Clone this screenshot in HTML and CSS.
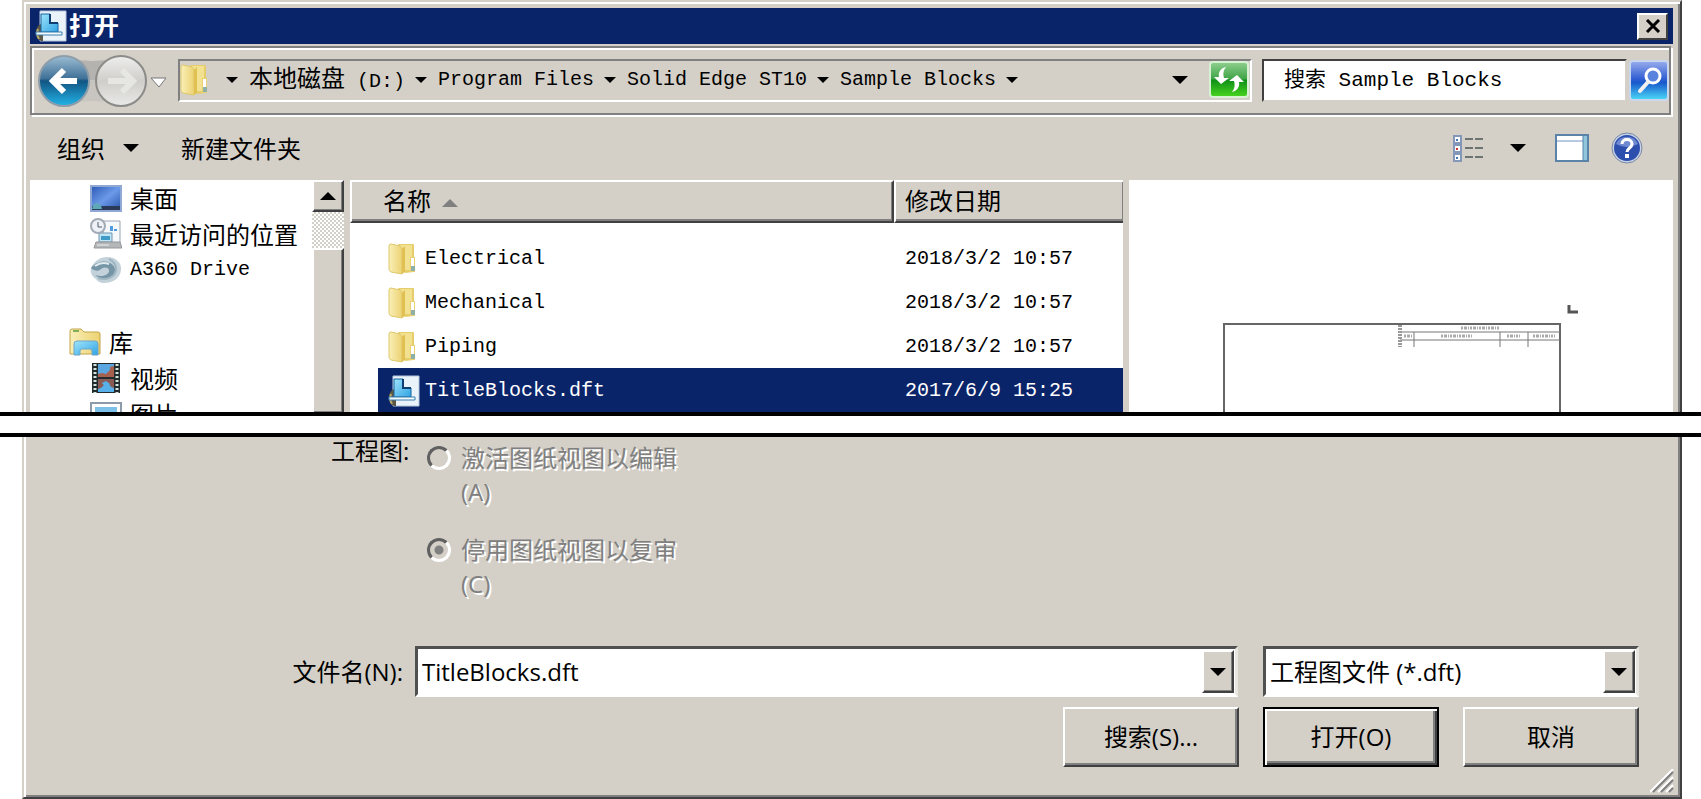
FILE: index.html
```
<!DOCTYPE html>
<html lang="zh-CN">

<head>
    <meta charset="UTF-8">
    <meta name="viewport" content="width=device-width, initial-scale=1.0">
    <title>打开</title>
    <link rel="stylesheet" href="styles.css">
</head>

<body>
    <!-- shared icons -->
    <svg class="defs" width="0" height="0" aria-hidden="true">
        <defs>
            <linearGradient id="gFolder" x1="0" x2="1" y1="0" y2="0">
                <stop offset="0" stop-color="#f9efb8" />
                <stop offset="1" stop-color="#ecd272" />
            </linearGradient>
            <linearGradient id="gCyan" x1="0" x2="1" y1="0" y2="1">
                <stop offset="0" stop-color="#9fe4fb" />
                <stop offset="1" stop-color="#2fa3e4" />
            </linearGradient>
            <symbol id="folder" viewBox="0 0 28 32">
                <path d="M10 2q0-1 1-1h14q1 0 1 1v27l-9 1z" fill="#e6cd6c" />
                <path d="M12 2h12v25H12z" fill="#f3e192" />
                <path d="M1 3q0-2 2-2l9 2q2 1 2 3v25l-11-2q-2-1-2-3z" fill="url(#gFolder)" stroke="#dfc86c" />
                <path d="M14 6l3-3v26l-3 2z" fill="#e0c050" />
                <path d="M22 14h5v15h-5z" fill="#ead274" />
                <path d="M23 15h3v8h-3z" fill="#fff" />
                <path d="M23 23h4v5h-4z" fill="#8fb0a4" />
            </symbol>
            <symbol id="draft" viewBox="0 0 32 32">
                <path d="M5 1h26v30H5z" fill="#eaf2fa" stroke="#b4c6de" />
                <path d="M6 14c-7 3-7 14 0 17h2V14z" fill="#5c5844" />
                <path d="M3 19c-1 3-1 7 1 10" stroke="#b8a868" stroke-width="2" fill="none" />
                <path d="M6 4h9v9h8v9H6z" fill="url(#gCyan)" stroke="#17659f" stroke-width="1" />
                <path d="M15 4v9h8" fill="none" stroke="#0d3f72" stroke-width="2" />
                <path d="M1 22h26v3H1z" fill="#f4fbff" stroke="#3b7cac" />
            </symbol>
        </defs>
    </svg>

    <div class="window window-top">
        <div class="titlebar">
            <svg class="app-icon" width="32" height="32"><use href="#draft" /></svg>
            <h1>打开</h1>
            <button type="button" class="close" aria-label="关闭">
                <svg width="16" height="14" viewBox="0 0 16 14"><path d="M2 1l12 12M14 1L2 13" stroke="#000" stroke-width="3" /></svg>
            </button>
        </div>

        <div class="navbar">
            <button type="button" class="nav-buttons" aria-label="返回">
                <svg width="130" height="54" viewBox="0 0 130 54">
                    <defs>
                        <linearGradient id="gBack" x1="0" x2="0" y1="0" y2="1">
                            <stop offset="0" stop-color="#9dbdd4" />
                            <stop offset="0.45" stop-color="#3f7197" />
                            <stop offset="0.5" stop-color="#115583" />
                            <stop offset="1" stop-color="#22b4e8" />
                        </linearGradient>
                        <linearGradient id="gFwd" x1="0" x2="0" y1="0" y2="1">
                            <stop offset="0" stop-color="#eeeeec" />
                            <stop offset="0.5" stop-color="#cfcecb" />
                            <stop offset="1" stop-color="#e9e9e7" />
                        </linearGradient>
                    </defs>
                    <path d="M28 4q28 6 57 0v22H28z" fill="#b5b3b0" />
                    <path d="M28 26h57v24q-29-6-57 0z" fill="#c8c5c0" />
                    <circle cx="28" cy="27" r="25" fill="url(#gBack)" stroke="#8d9daa" stroke-width="2" />
                    <path d="M28 16L17 27l11 11M17 27h24" fill="none" stroke="#fff" stroke-width="6" />
                    <circle cx="85" cy="27" r="25" fill="url(#gFwd)" stroke="#8b8b88" stroke-width="2" />
                    <path d="M86 16l11 11-11 11M97 27H72" fill="none" stroke="#e6e6e3" stroke-width="6" />
                    <path d="M115 24h15l-7 9z" fill="#fff" stroke="#77777b" stroke-width="1" />
                </svg>
            </button>

            <div class="address">
                <svg class="address-folder" width="28" height="32"><use href="#folder" /></svg>
                <i class="arrow small"></i>
                <a href="#"><span class="cjk">本地磁盘</span> (D:)</a>
                <i class="arrow small"></i>
                <a href="#">Program Files</a>
                <i class="arrow small"></i>
                <a href="#">Solid Edge ST10</a>
                <i class="arrow small"></i>
                <a href="#">Sample Blocks</a>
                <i class="arrow small"></i>
                <button type="button" class="plain push" aria-label="历史记录"><i class="arrow"></i></button>
                <button type="button" class="plain refresh" aria-label="刷新">
                    <svg width="40" height="37" viewBox="0 0 40 37">
                        <defs>
                            <linearGradient id="gGreen" x1="0" x2="0" y1="0" y2="1">
                                <stop offset="0" stop-color="#8fd08f" />
                                <stop offset="0.48" stop-color="#41a447" />
                                <stop offset="0.52" stop-color="#109018" />
                                <stop offset="1" stop-color="#4ad520" />
                            </linearGradient>
                        </defs>
                        <rect x="1" y="1" width="38" height="35" rx="3" fill="url(#gGreen)" stroke="#d8f0d4" stroke-width="2" />
                        <path d="M17 6c-5 1-8 5-7 10H5l7 7 8-6h-5c-1-4-1-7 2-11z" fill="#fff" />
                        <path d="M23 31c5-1 8-5 7-10h5l-7-7-8 6h5c1 4 1 7-2 11z" fill="#fff" />
                    </svg>
                </button>
            </div>

            <input class="search" type="text" placeholder="搜索 Sample Blocks" aria-label="搜索">
            <button type="button" class="plain" aria-label="开始搜索">
                <svg width="40" height="42" viewBox="0 0 40 42">
                    <defs>
                        <linearGradient id="gBlue" x1="0" x2="0" y1="0" y2="1">
                            <stop offset="0" stop-color="#9aaeec" />
                            <stop offset="0.45" stop-color="#3360d4" />
                            <stop offset="0.55" stop-color="#1858cc" />
                            <stop offset="1" stop-color="#4cdcf8" />
                        </linearGradient>
                    </defs>
                    <rect x="1" y="1" width="38" height="39" rx="3" fill="url(#gBlue)" stroke="#c8d6ee" stroke-width="2" />
                    <circle cx="24" cy="16" r="7" fill="#5a83dd" stroke="#fff" stroke-width="3" />
                    <path d="M19 22l-8 9" stroke="#f0f0f0" stroke-width="4" stroke-linecap="round" />
                </svg>
            </button>
        </div>

        <div class="toolbar">
            <button type="button" class="plain">组织 <i class="arrow"></i></button>
            <button type="button" class="plain">新建文件夹</button>
            <button type="button" class="plain push" aria-label="更改视图">
                <svg width="32" height="28" viewBox="0 0 32 28">
                    <g fill="#fff" stroke="#8497b8" stroke-width="2">
                        <rect x="2" y="2" width="7" height="7" />
                        <rect x="2" y="11" width="7" height="7" />
                        <rect x="2" y="20" width="7" height="7" />
                    </g>
                    <path d="M4 5h2v2H4zM4 23h2v2H4z" fill="#3f78b4" />
                    <path d="M4 14h2v2H4z" fill="#c33" />
                    <path d="M13 5h8m2 0h8M13 14h8m2 0h8M13 23h8m2 0h8" stroke="#6b7470" stroke-width="2" />
                </svg>
                <i class="arrow"></i>
            </button>
            <button type="button" class="plain" aria-label="预览窗格">
                <svg width="34" height="28" viewBox="0 0 34 28">
                    <rect x="1" y="1" width="32" height="26" fill="#fff" stroke="#5b82a9" stroke-width="2" />
                    <path d="M2 7h26" stroke="#6f94c4" stroke-width="1" />
                    <path d="M28 2h4v24h-4z" fill="#8fc6dc" />
                    <path d="M28 2v24" stroke="#5b82a9" />
                </svg>
            </button>
            <button type="button" class="plain" aria-label="帮助">
                <svg width="32" height="32" viewBox="0 0 32 32">
                    <circle cx="16" cy="16" r="15" fill="#c9d3e6" stroke="#7a88a4" stroke-width="1" />
                    <circle cx="16" cy="16" r="13" fill="#2c4fae" />
                    <path d="M5 12a12 12 0 0 1 22 0q-11 6-22 0z" fill="#6f8ad0" />
                    <path d="M11 12c0-6 10-6 10 0 0 4-5 4-5 8" fill="none" stroke="#fff" stroke-width="3" />
                    <path d="M14 22h4v4h-4z" fill="#fff" />
                </svg>
            </button>
        </div>

        <div class="browser">
            <ul class="places">
                <li>
                    <svg width="32" height="28" viewBox="0 0 32 28">
                        <defs>
                            <linearGradient id="gScreen" x1="0" x2="1" y1="0" y2="1">
                                <stop offset="0" stop-color="#2a58b4" />
                                <stop offset="0.5" stop-color="#6c9ae8" />
                                <stop offset="1" stop-color="#2450a8" />
                            </linearGradient>
                        </defs>
                        <rect x="1" y="2" width="30" height="25" fill="url(#gScreen)" stroke="#8fa9d4" stroke-width="2" />
                        <path d="M2 22h28v4H2z" fill="#2a3a58" />
                        <path d="M2 25q1-6 5-6t5 6z" fill="#5ea8b8" />
                    </svg>
                    桌面
                </li>
                <li>
                    <svg width="32" height="32" viewBox="0 0 32 32">
                        <path d="M13 3h17v22H13z" fill="#f6f9fc" stroke="#9aa6b2" />
                        <path d="M20 8h3v5h-3zM24 11h3v2h-3z" fill="#4f9be0" />
                        <path d="M9 15h13v9H9z" fill="#bfe4f4" stroke="#6f93b0" />
                        <path d="M11 18h9v4h-9z" fill="#3f9cc8" />
                        <path d="M6 24h24l2 6H4z" fill="#b4b6b8" stroke="#94979a" />
                        <path d="M7 27h12" stroke="#eee" />
                        <circle cx="8" cy="8" r="7" fill="#eef1f5" stroke="#a3abb6" stroke-width="2" />
                        <path d="M8 4v5h4" fill="none" stroke="#4c5a70" />
                    </svg>
                    最近访问的位置
                </li>
                <li>
                    <svg width="32" height="28" viewBox="0 0 32 28">
                        <path d="M1 12C4 4 12 1 17 1c9 0 15 6 14 13-1 9-9 13-17 13-4 0-7-2-8-4C2 21 0 16 1 12z" fill="#c3d2da" />
                        <path d="M5 19c8 3 15-1 14-5-1-3-5-3-8-1-3 3-7 2-10-1C6 6 14 4 20 7c8 4 6 13-2 15-5 1-10 0-13-3z" fill="#7695a6" />
                        <path d="M8 22c8 3 18-1 18-9 0-5-3-8-7-10" stroke="#9fb6c2" stroke-width="2" fill="none" />
                        <path d="M5 10c4-3 9-4 14-2" stroke="#e2ebf0" stroke-width="2" fill="none" />
                    </svg>
                    <span class="mono">A360 Drive</span>
                </li>
                <li></li>
                <li class="root">
                    <svg width="32" height="28" viewBox="0 0 32 28">
                        <path d="M1 3q0-2 2-2h9l3 3h14q2 0 2 2v20H1z" fill="url(#gFolder)" stroke="#c3a548" />
                        <path d="M4 3h6" stroke="#7eb05a" stroke-width="2" />
                        <path d="M5 27V16q0-3 3-3h18q3 0 3 3v11h-6v-4q0-2-2-2h-8q-2 0-2 2v4z" fill="url(#gCyan)" stroke="#6fa5c8" />
                    </svg>
                    库
                </li>
                <li>
                    <svg width="32" height="30" viewBox="0 0 32 30">
                        <path d="M2 0h28v30H2z" fill="#222c2e" />
                        <path d="M8 1h16v13H8z" fill="#5aa6e0" />
                        <path d="M8 16h16v13H8z" fill="#58b0ea" />
                        <path d="M8 14v-3l4-1 4 1 4-4V4l4-1v11z" fill="#a8604e" />
                        <path d="M8 16h16v9l-3-1-3-4-4 2-3 3-3 1z" fill="#8a5a54" />
                        <path d="M12 20l4-2 4 3-3 5z" fill="#58b0ea" />
                        <path d="M5 1v29M27 1v29" stroke="#d4e6dc" stroke-width="3" stroke-dasharray="2 2" />
                    </svg>
                    视频
                </li>
                <li>
                    <svg width="32" height="28" viewBox="0 0 32 28">
                        <rect x="1" y="3" width="30" height="24" fill="#fff" stroke="#8d9aaa" stroke-width="2" />
                        <path d="M5 7h22v16H5z" fill="#7cc2e8" />
                    </svg>
                    图片
                </li>
            </ul>
            <div class="scrollbar">
                <button type="button" class="scroll-up" aria-label="向上滚动"><i class="arrow up"></i></button>
                <div class="thumb"></div>
            </div>

            <div class="files">
                <table>
                    <thead>
                        <tr>
                            <th>名称 <i class="arrow up sort"></i></th>
                            <th class="date">修改日期</th>
                        </tr>
                    </thead>
                    <tbody>
                        <tr>
                            <td><div class="file"><svg width="28" height="32"><use href="#folder" /></svg>Electrical</div></td>
                            <td>2018/3/2 10:57</td>
                        </tr>
                        <tr>
                            <td><div class="file"><svg width="28" height="32"><use href="#folder" /></svg>Mechanical</div></td>
                            <td>2018/3/2 10:57</td>
                        </tr>
                        <tr>
                            <td><div class="file"><svg width="28" height="32"><use href="#folder" /></svg>Piping</div></td>
                            <td>2018/3/2 10:57</td>
                        </tr>
                        <tr class="selected">
                            <td><div class="file"><svg width="32" height="32"><use href="#draft" /></svg>TitleBlocks.dft</div></td>
                            <td>2017/6/9 15:25</td>
                        </tr>
                    </tbody>
                </table>
            </div>

            <div class="preview">
                <svg width="544" height="232" viewBox="0 0 544 232">
                    <path d="M95 232V144h336v88" fill="none" stroke="#666" stroke-width="2" />
                    <path d="M440 125v7h9" fill="none" stroke="#555" stroke-width="3" />
                    <path d="M271 152h160M271 160h160" fill="none" stroke="#777" />
                    <path d="M271 145v22" stroke="#999" stroke-width="4" stroke-dasharray="2 1" />
                    <path d="M285 152v15M371 152v15M399 152v15" stroke="#777" />
                    <path d="M332 148h38M275 156h8M312 156h31M378 156h13M404 156h22" stroke="#aaa" stroke-width="3" stroke-dasharray="2 1 3 1 1 1" />
                </svg>
            </div>
        </div>
    </div>

    <div class="cut"></div>

    <form class="window window-bottom">
        <div class="options" role="radiogroup" aria-labelledby="draftLabel">
            <span class="options-label" id="draftLabel">工程图:</span>
            <div class="choices">
                <div class="choice">
                    <input type="radio" id="activate" name="view" disabled>
                    <label for="activate">激活图纸视图以编辑(A)</label>
                </div>
                <div class="choice">
                    <input type="radio" id="inactive" name="view" checked disabled>
                    <label for="inactive">停用图纸视图以复审(C)</label>
                </div>
            </div>
        </div>

        <div class="name-row">
            <label for="filename">文件名(N):</label>
            <div class="combo name-combo">
                <input type="text" id="filename" value="TitleBlocks.dft">
                <button type="button" class="drop" aria-label="展开"><i class="arrow"></i></button>
            </div>
            <div class="combo type-combo">
                <select aria-label="文件类型">
                    <option>工程图文件 (*.dft)</option>
                </select>
                <span class="drop"><i class="arrow"></i></span>
            </div>
        </div>

        <div class="actions">
            <button type="button">搜索(S)...</button>
            <button type="submit" class="default">打开(O)</button>
            <button type="button">取消</button>
        </div>

        <svg class="grip" width="24" height="24" viewBox="0 0 24 24">
            <path d="M0 23L23 0M8 23L23 8M16 23l7-7" stroke="#fff" stroke-width="2" />
            <path d="M3 23L23 3M11 23l12-12M19 23l4-4" stroke="#808080" stroke-width="2" />
        </svg>
    </form>
</body>

</html>
```

FILE: styles.css
```
* {
    box-sizing: border-box;
}

body {
    margin: 0;
    background: #fff;
    color: #000;
    font-family: "Open Sans", "Noto Sans CJK SC", sans-serif;
    font-size: 24px;
    line-height: 34px;
}

button,
input,
select {
    font: inherit;
    color: inherit;
    border-radius: 0;
}

svg {
    display: block;
    flex: none;
}

.defs {
    position: absolute;
}

.window {
    margin: 0 19px 0 22px;
    background: #d4d0c8;
    border: solid;
    border-width: 0 2px;
    border-color: #d4d0c8 #404040 #404040 #d4d0c8;
    box-shadow: inset 2px 0 #fff, inset -2px 0 #808080;
}

.window-top {
    font-family: "Noto Sans CJK SC", sans-serif;
    border-top-width: 2px;
    padding: 6px 7px 0 6px;
    box-shadow: inset 2px 2px #fff, inset -2px 0 #808080;
}

.mono,
.address,
td {
    font-family: "Liberation Mono", monospace;
    font-size: 20px;
}

.plain {
    display: flex;
    align-items: center;
    border: 0;
    padding: 0;
    background: none;
}

.push {
    margin-left: auto;
}

/* triangles */
.arrow {
    flex: none;
    display: inline-block;
    border: solid transparent;
    border-width: 8px 8px 0;
    border-top-color: #000;
}

.arrow.small {
    border-width: 6px 6px 0;
    margin: 0 11px 0 10px;
}

.arrow.up {
    border-width: 0 8px 8px;
    border-bottom-color: #000;
}

.arrow.sort {
    border-bottom-color: #808080;
    margin-left: 6px;
    vertical-align: middle;
}

/* title bar */
.titlebar {
    display: flex;
    align-items: center;
    height: 36px;
    padding: 0 5px;
    background: #0a246a;
    color: #fff;
}

.titlebar h1 {
    flex: 1;
    margin: 0 0 0 2px;
    font-size: 25px;
    line-height: 32px;
    padding-bottom: 4px;
    font-weight: bold;
}

.close {
    display: flex;
    align-items: center;
    justify-content: center;
    width: 31px;
    height: 27px;
    padding: 0;
    background: #d4d0c8;
    border: 2px solid;
    border-color: #fff #404040 #404040 #fff;
}

/* address bar */
.navbar {
    display: flex;
    align-items: center;
    height: 69px;
    margin: 2px 2px 2px 0;
    padding: 0 0 0 4px;
    border: 2px solid #808080;
    box-shadow: inset 2px 2px #fff, 2px 2px #fff;
}

.nav-buttons {
    border: 0;
    padding: 0;
    background: none;
}

.address {
    flex: 1;
    display: flex;
    align-items: center;
    height: 43px;
    margin: 0 10px 0 12px;
    padding: 0 1px 2px 0;
    border: 2px solid;
    border-color: #808080 #fff #fff #808080;
}

.address a {
    color: #000;
    text-decoration: none;
    white-space: pre;
}

.address-folder {
    margin-right: 8px;
}

.cjk {
    font-family: "Noto Sans CJK SC", sans-serif;
    font-size: 24px;
}

.refresh {
    margin-left: 21px;
}

.search {
    width: 365px;
    height: 43px;
    margin-right: 2px;
    padding: 0 20px;
    background: #fff;
    border: 2px solid;
    border-color: #404040 #d4d0c8 #d4d0c8 #404040;
    font-family: "Liberation Mono", "Noto Sans CJK SC", monospace;
    font-size: 21px;
}

.search::placeholder {
    color: #000;
    opacity: 1;
}

/* toolbar */
.toolbar {
    display: flex;
    align-items: center;
    gap: 38px;
    height: 63px;
    padding: 0 30px 1px 27px;
}

.toolbar .arrow {
    margin-left: 18px;
}

.toolbar .plain:first-child {
    margin-right: 4px;
}

.toolbar .push {
    margin-left: auto;
    margin-right: -9px;
}

.toolbar .push .arrow {
    margin-left: 26px;
}

.toolbar .plain:last-child {
    margin-left: -16px;
}

/* panes */
.browser {
    display: flex;
    height: 232px;
    overflow: hidden;
}

.places {
    width: 282px;
    margin: 0;
    padding: 0;
    background: #fff;
    list-style: none;
}

.places li {
    display: flex;
    align-items: center;
    gap: 8px;
    height: 36px;
    padding-left: 60px;
    white-space: nowrap;
}

.places .root {
    padding-left: 39px;
}

.scrollbar {
    display: flex;
    flex-direction: column;
    width: 32px;
    margin-right: 6px;
    background: repeating-conic-gradient(#d4d0c8 0 25%, #fff 0 50%) 0 0 / 4px 4px;
}

.scroll-up,
.thumb,
.drop {
    background: #d4d0c8;
    border: 2px solid;
    border-color: #fff #404040 #404040 #fff;
    box-shadow: inset -1px -1px #808080;
}

.scroll-up {
    display: flex;
    align-items: center;
    justify-content: center;
    height: 32px;
    padding: 0;
}

.thumb {
    flex: 1;
    margin-top: 36px;
    border-bottom: 0;
}

.files {
    flex: 1;
    margin-right: 6px;
    background: #fff;
}

table {
    width: 100%;
    border-collapse: separate;
    border-spacing: 0;
}

th {
    height: 43px;
    padding: 0 0 3px 31px;
    background: #d4d0c8;
    border: 2px solid;
    border-color: #fff #404040 #404040 #fff;
    box-shadow: inset -1px -2px #808080;
    font-weight: normal;
    text-align: left;
}

th.date {
    width: 229px;
    padding-left: 9px;
    border-right: 0;
}

tbody::before {
    content: "";
    display: block;
    height: 13px;
}

td {
    height: 44px;
    padding: 2px 0 0 11px;
    white-space: nowrap;
}

td:first-child {
    padding-left: 38px;
}

.file {
    display: flex;
    align-items: center;
    gap: 9px;
}

.selected td {
    background: #0a246a;
    color: #fff;
}

.selected td:first-child {
    background: linear-gradient(to right, #fff 28px, #0a246a 28px);
}

.selected .file {
    gap: 5px;
}

.preview {
    flex: none;
    background: #fff;
}

/* the middle of the dialog is left out */
.cut {
    height: 25px;
    border: solid #000;
    border-width: 4px 0;
}

/* lower part */
.window-bottom {
    position: relative;
    padding: 4px 41px 30px 0;
    border-bottom-width: 2px;
    box-shadow: inset 2px 0 #fff, inset -2px -2px #808080;
}

.options {
    display: flex;
    align-items: flex-start;
    padding-left: 307px;
}

.options-label {
    width: 96px;
    line-height: 20px;
}

.choices {
    display: grid;
    gap: 24px;
}

.choice {
    display: flex;
    align-items: flex-start;
    gap: 10px;
    width: 254px;
    color: #808080;
    text-shadow: 2px 2px #fff;
}

.choice input {
    appearance: none;
    flex: none;
    width: 24px;
    height: 24px;
    margin: 5px 0;
    border: 3px solid;
    border-color: #606060 #fff #fff #606060;
    border-radius: 50%;
}

.choice input:checked {
    background: radial-gradient(circle, #808080 4px, transparent 5px);
}

.name-row {
    display: flex;
    align-items: center;
    margin-top: 45px;
}

.name-row label {
    width: 379px;
    margin-right: 12px;
    text-align: right;
}

.combo {
    display: flex;
    height: 51px;
    padding: 1px;
    background: #fff;
    border: 3px solid;
    border-color: #505050 #e8e6e0 #fff #505050;
}

.combo input,
.combo select {
    appearance: none;
    flex: 1;
    min-width: 0;
    padding: 0 3px;
    border: 0;
    background: none;
    outline: 0;
}

.name-combo {
    flex: 1;
}

.type-combo {
    width: 376px;
    margin-left: 25px;
}

.drop {
    display: flex;
    align-items: center;
    justify-content: center;
    width: 32px;
    padding: 0;
    pointer-events: none;
}

.actions {
    display: flex;
    justify-content: flex-end;
    gap: 24px;
    margin-top: 10px;
}

.actions button {
    width: 176px;
    height: 60px;
    background: #d4d0c8;
    border: 2px solid;
    border-color: #fff #404040 #404040 #fff;
    box-shadow: inset -2px -2px #808080;
}

.actions .default {
    border-color: #000;
    box-shadow: inset 2px 2px #fff, inset -2px -2px #404040, inset -4px -4px #808080;
}

.grip {
    position: absolute;
    right: 6px;
    bottom: 4px;
}
```
